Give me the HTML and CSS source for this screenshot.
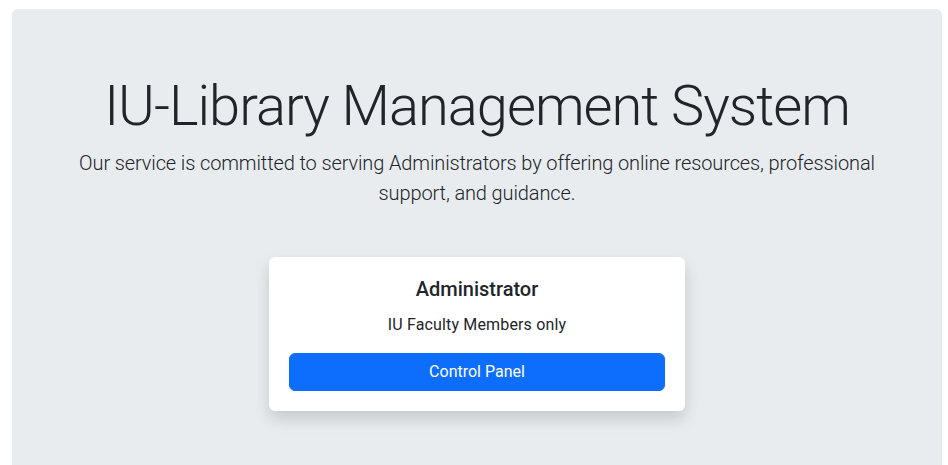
FILE: index.html
```html
<!DOCTYPE html>
<html lang="en">
<head>
<meta charset="utf-8">
<title>IU-Library Management System</title>
<link rel="stylesheet" href="styles.css">
</head>
<body>
  <section class="hero">
    <h1 class="hero-title">IU-Library Management System</h1>
    <p class="hero-lead">Our service is committed to serving Administrators by offering online resources, professional support, and guidance.</p>
    <div class="card-row">
      <div class="card">
        <h5 class="card-title">Administrator</h5>
        <p class="card-text">IU Faculty Members only</p>
        <a class="btn-primary" href="#">Control Panel</a>
      </div>
    </div>
  </section>
</body>
</html>
```
FILE: styles.css
```css
html, body {
  margin: 0;
  padding: 0;
  background: #ffffff;
}
body {
  font-family: Roboto, "Noto Sans", "Liberation Sans", sans-serif;
  color: #212529;
  overflow: hidden;
}
.hero {
  margin: 9px 6px 0 12px;
  padding: 64px 32px 80px;
  background: #e9ecef;
  border-radius: 6px;
  text-align: center;
}
.hero-title {
  margin: 0 0 8px;
  font-size: 56px;
  font-weight: 300;
  line-height: 1.2;
  letter-spacing: -1px;
}
.hero-lead {
  margin: 0 auto;
  font-size: 20px;
  font-weight: 300;
  line-height: 1.5;
  letter-spacing: -0.12px;
}
.card-row {
  display: flex;
  justify-content: center;
  margin-top: 49px;
}
.card {
  width: 376px;
  padding: 20px;
  background: #ffffff;
  border-radius: 6px;
  box-shadow: 0 8px 16px rgba(0, 0, 0, 0.15);
  display: flex;
  flex-direction: column;
  align-items: stretch;
}
.card-title {
  margin: 0 0 12px;
  font-size: 20px;
  font-weight: 500;
  line-height: 1.2;
}
.card-text {
  margin: 0 0 16px;
  font-size: 16px;
  line-height: 1.5;
  letter-spacing: 0.15px;
}
.btn-primary {
  display: block;
  padding: 6px 12px;
  border: 1px solid #0d6efd;
  border-radius: 6px;
  background: #0d6efd;
  color: #ffffff;
  font-size: 16px;
  line-height: 24px;
  text-decoration: none;
}
```
